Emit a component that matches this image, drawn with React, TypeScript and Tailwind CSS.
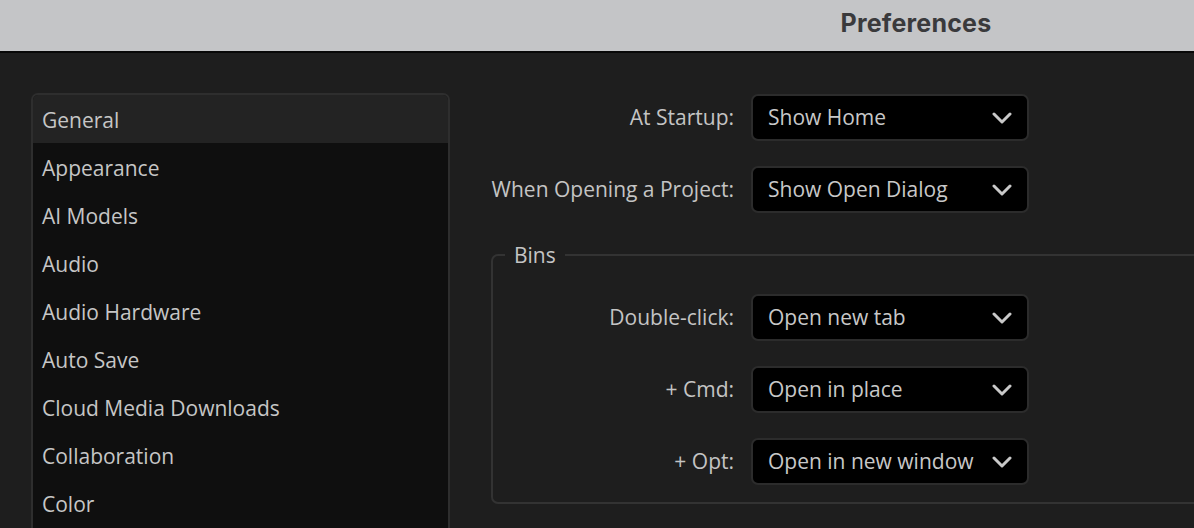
import React from "react";

const font = { fontFamily: '"Open Sans", "Noto Sans", sans-serif' };

function Chevron() {
  return (
    <svg width="20" height="12" viewBox="0 0 20 12" fill="none" className="shrink-0">
      <polyline points="2,2 10,10 18,2" stroke="#c9c9c9" strokeWidth="3" strokeLinecap="round" strokeLinejoin="round" />
    </svg>
  );
}

function Dropdown({ value }: { value: string }) {
  return (
    <div className="flex h-[47px] w-[278px] items-center justify-between rounded-[7px] border-2 border-[#2c2c2c] bg-black pl-[15px] pr-[15px]">
      <span className="text-[21px] leading-none text-[#c8c8c8]">{value}</span>
      <Chevron />
    </div>
  );
}

function Row({ label, value, labelWidth }: { label: string; value: string; labelWidth: string }) {
  return (
    <div className="flex items-center gap-[17px]">
      <div className={`${labelWidth} text-right text-[21px] leading-none text-[#c4c4c4]`}>{label}</div>
      <Dropdown value={value} />
    </div>
  );
}

const items = [
  "General",
  "Appearance",
  "AI Models",
  "Audio",
  "Audio Hardware",
  "Auto Save",
  "Cloud Media Downloads",
  "Collaboration",
  "Color",
];

export default function App() {
  return (
    <div className="h-[528px] w-[1194px] overflow-hidden bg-[#1e1e1e]" style={font}>
      <div className="flex h-[53px] w-[1832px] items-start justify-center border-b-2 border-[#080808] bg-[#c4c5c7] pt-[7px]">
        <span
          className="text-[25px] font-bold leading-[32px] tracking-[0.2px] text-[#3a3a3c]"
          style={{ fontFamily: 'Inter, "Liberation Sans", sans-serif' }}
        >
          Preferences
        </span>
      </div>
      <div className="flex items-start pl-[31px]">
        <div className="mt-[40px] h-[460px] w-[419px] shrink-0 overflow-hidden rounded-[7px] border-2 border-[#2e2e2e] bg-[#0f0f0f]">
          {items.map((it, i) => (
            <div
              key={it}
              className={`flex h-[48px] items-center pl-[9px] pt-[4px] text-[21px] text-[#c6c6c6] ${i === 0 ? "bg-[#232323]" : ""}`}
            >
              {it}
            </div>
          ))}
        </div>
        <div className="ml-[38px] mt-[41px] flex w-[800px] shrink-0 flex-col">
          <div className="flex flex-col gap-[25px]">
            <Row label="At Startup:" value="Show Home" labelWidth="w-[246px]" />
            <Row label="When Opening a Project:" value="Show Open Dialog" labelWidth="w-[246px]" />
          </div>
          <fieldset className="ml-[3px] mt-[28px] w-[800px] rounded-[7px] border-2 border-[#333333] pb-[17px] pl-[12px]">
            <legend className="px-[9px] text-[21px] leading-[28px] text-[#c4c4c4]">Bins</legend>
            <div className="mt-[25px] flex flex-col gap-[25px]">
              <Row label="Double-click:" value="Open new tab" labelWidth="w-[229px]" />
              <Row label="+ Cmd:" value="Open in place" labelWidth="w-[229px]" />
              <Row label="+ Opt:" value="Open in new window" labelWidth="w-[229px]" />
            </div>
          </fieldset>
        </div>
      </div>
    </div>
  );
}
